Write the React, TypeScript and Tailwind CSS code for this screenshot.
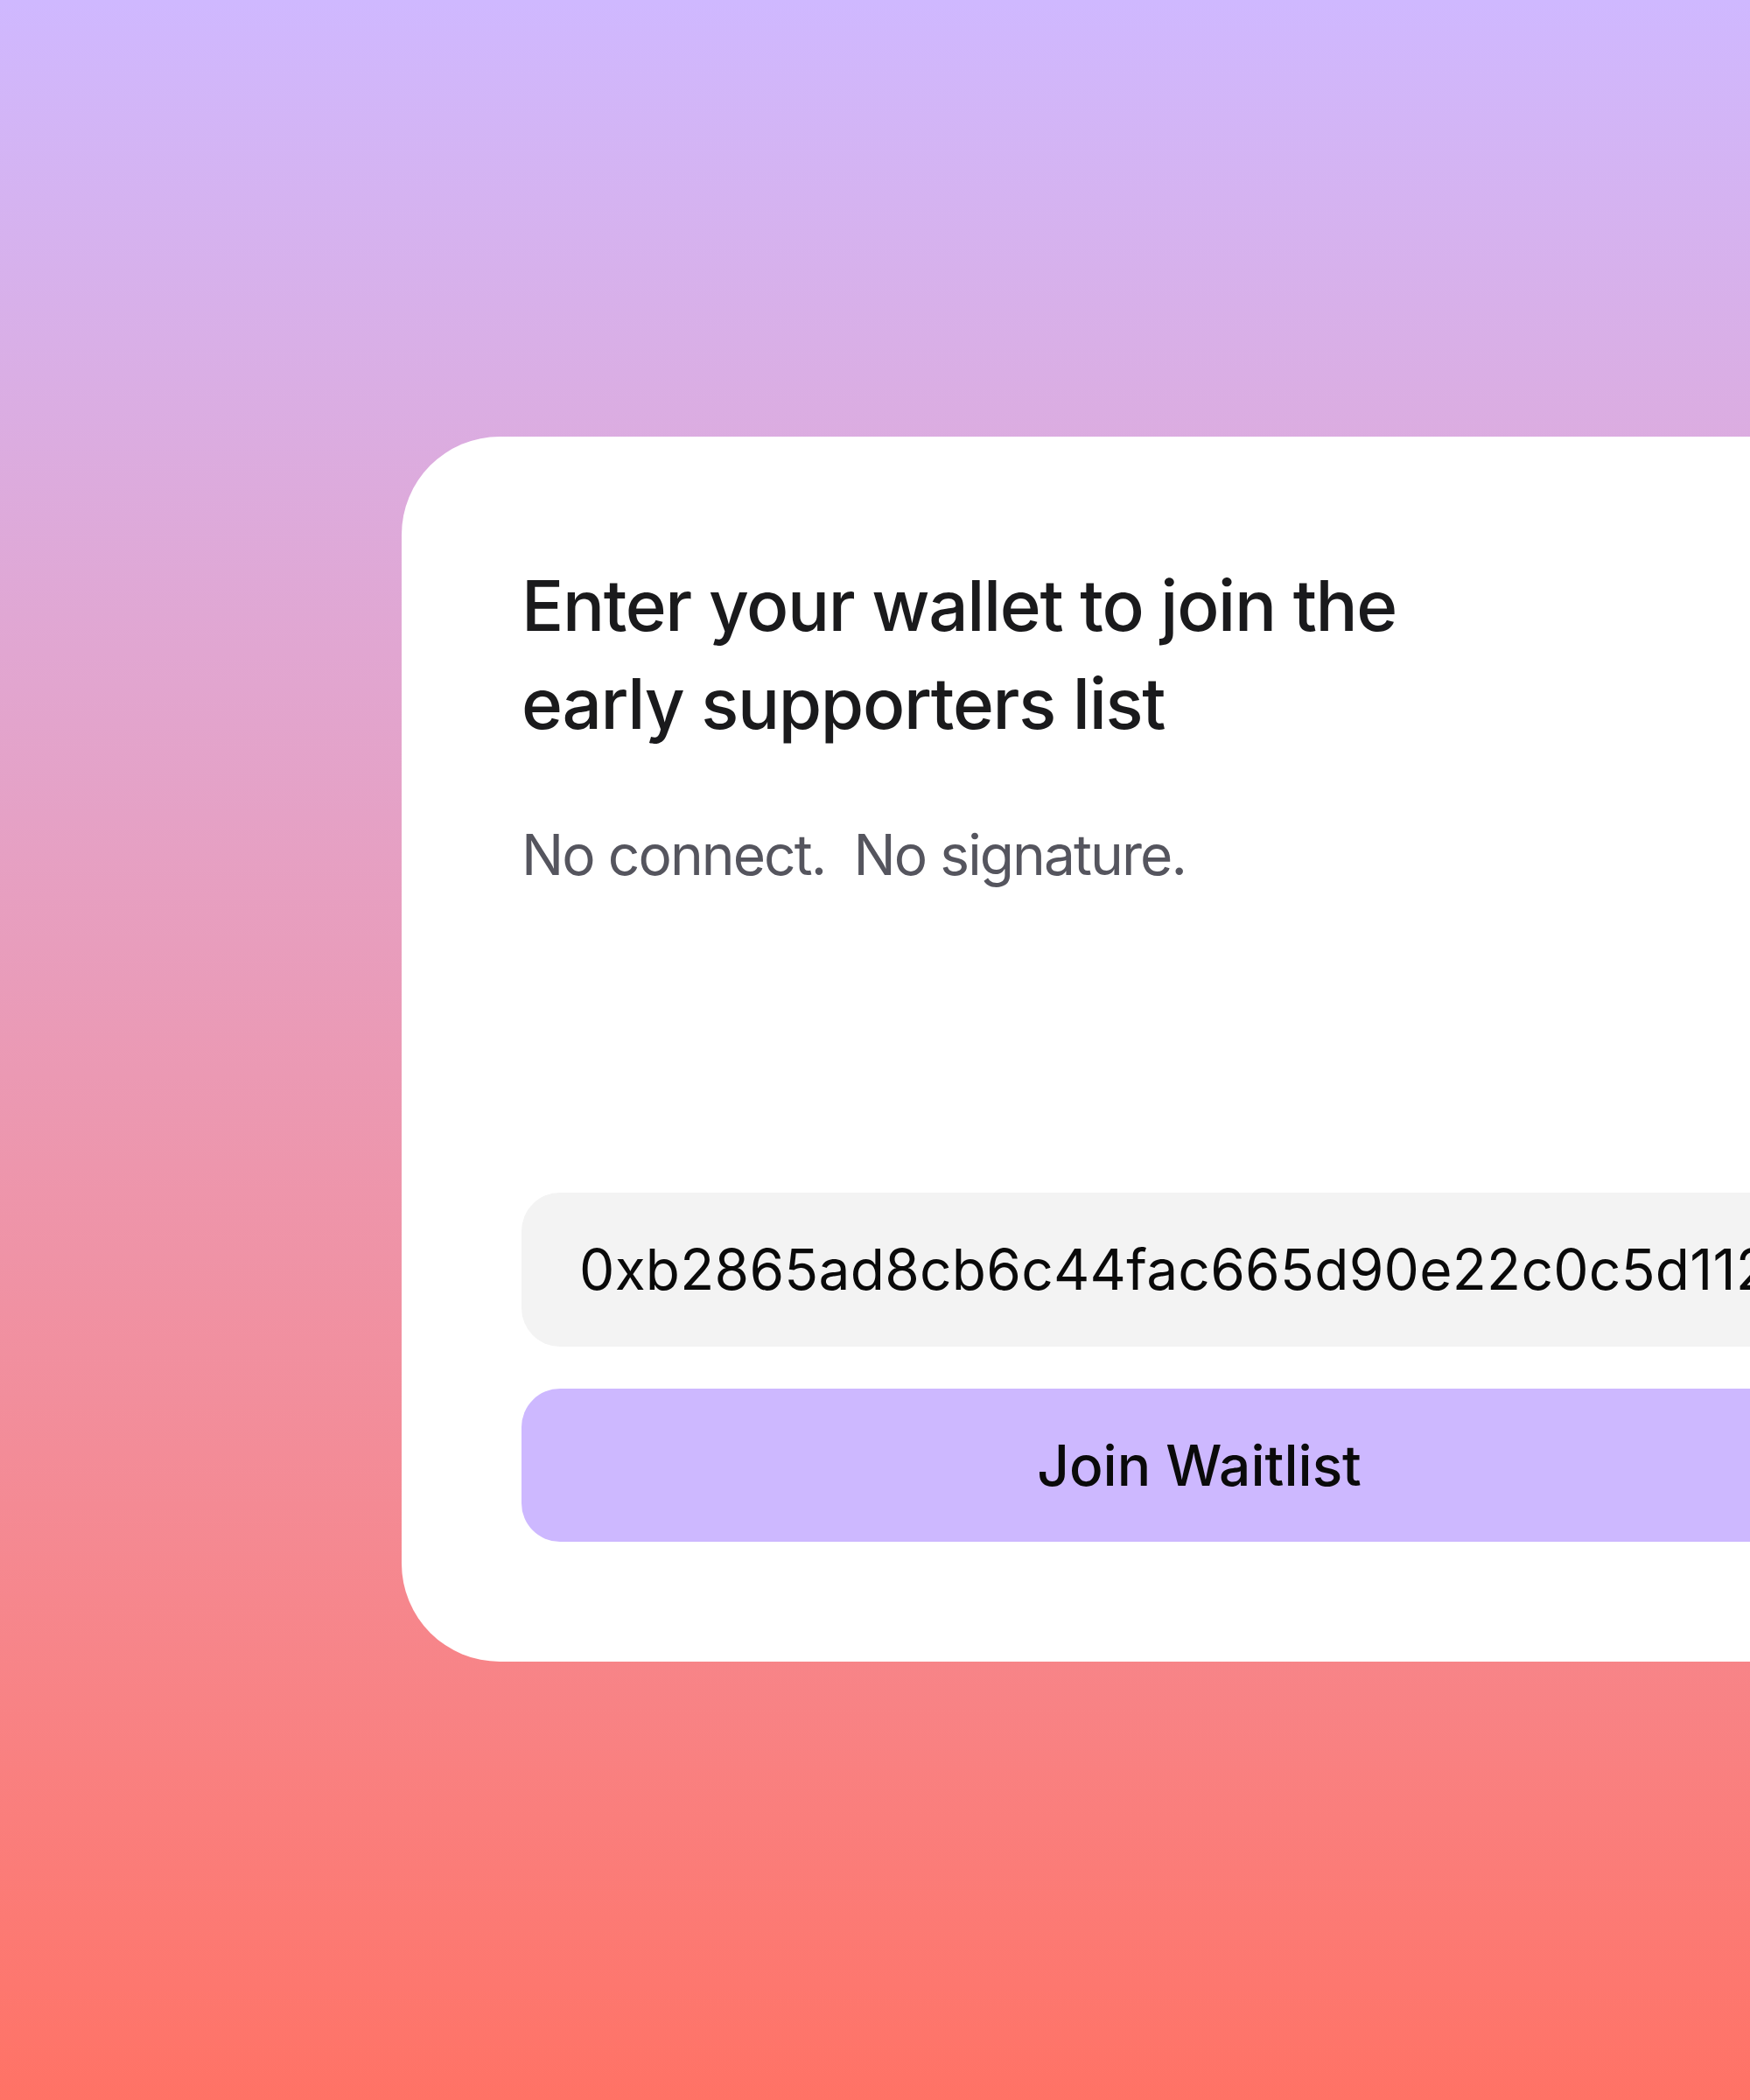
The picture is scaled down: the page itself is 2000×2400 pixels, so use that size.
import React from "react";

export default function App() {
  return (
    <div
      className="w-[2000px] h-[2400px] overflow-hidden bg-gradient-to-b from-[#cfb8ff] to-[#ff7265] pl-[459px] pt-[499px]"
      style={{ fontFamily: "Inter, 'Noto Sans', sans-serif" }}
    >
      <div className="w-[1823px] h-[1400px] shrink-0 bg-white rounded-[112px] p-[137px] flex flex-col">
        <h1 className="text-[80px] leading-[112px] font-medium text-[#1a1a1c] tracking-[-0.017em]">
          Enter your wallet to join the
          <br />
          early supporters list
        </h1>
        <p className="mt-[72px] text-[64px] leading-[1.4] text-[#55555e] whitespace-pre tracking-[-0.03em]">
          {"No connect.  No signature."}
        </p>
        <div className="flex-1" />
        <div className="h-[176px] rounded-[44px] bg-[#f3f3f3] flex items-center pl-[66px] overflow-hidden">
          <span className="text-[64px] leading-none text-[#0a0a0a] whitespace-nowrap tracking-[0.004em]">
            0xb2865ad8cb6c44fac665d90e22c0c5d1125a9f3e
          </span>
        </div>
        <button className="mt-[48px] h-[175px] rounded-[44px] bg-[#cdb8ff] flex items-center justify-center text-[64px] font-medium text-[#0a0a0a]">
          Join Waitlist
        </button>
      </div>
    </div>
  );
}
